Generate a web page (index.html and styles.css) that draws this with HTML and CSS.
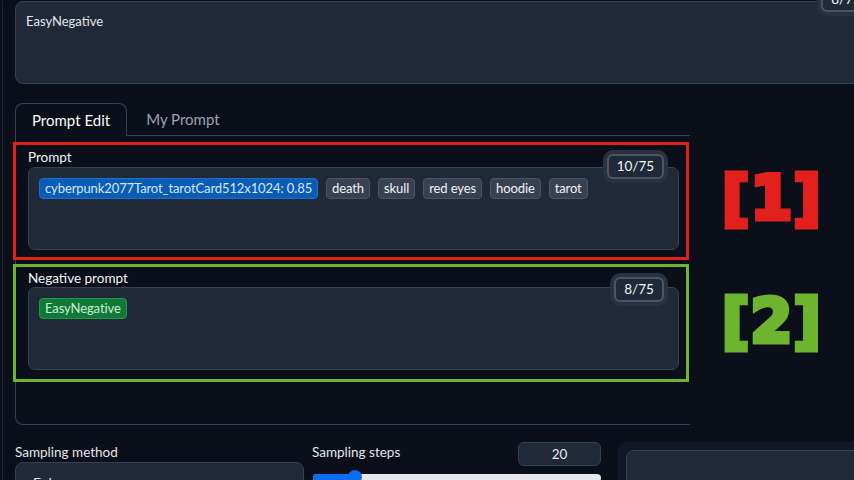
FILE: index.html
```html
<!DOCTYPE html>
<html>
<head>
<meta charset="utf-8">
<link rel="stylesheet" href="styles.css">
</head>
<body>
<div class="page">
  <div class="col">
    <div class="top-area">
      <div class="top-text">EasyNegative</div>
      <div class="counter counter-top">8/75</div>
    </div>

    <div class="tabs">
      <div class="tab-nav">
        <div class="tab active">Prompt Edit</div>
        <div class="tab inactive">My Prompt</div>
        <div class="tab-fill"></div>
      </div>
      <div class="tab-panel">
        <div class="block mark-red">
          <div class="label">Prompt</div>
          <div class="field">
            <span class="chip chip-blue">cyberpunk2077Tarot_tarotCard512x1024: 0.85</span>
            <span class="chip">death</span>
            <span class="chip">skull</span>
            <span class="chip">red eyes</span>
            <span class="chip">hoodie</span>
            <span class="chip">tarot</span>
          </div>
          <div class="counter counter-prompt">10/75</div>
          <div class="tag tag-red">[1]</div>
        </div>
        <div class="block mark-green">
          <div class="label">Negative prompt</div>
          <div class="field">
            <span class="chip chip-green">EasyNegative</span>
          </div>
          <div class="counter counter-neg">8/75</div>
          <div class="tag tag-green">[2]</div>
        </div>
      </div>
    </div>

    <div class="bottom">
      <div class="bcol">
        <div class="blabel">Sampling method</div>
        <div class="dropdown">Euler a</div>
      </div>
      <div class="bcol">
        <div class="steps-head">
          <div class="blabel">Sampling steps</div>
          <div class="num">20</div>
        </div>
        <div class="slider">
          <div class="slider-fill"></div>
          <div class="slider-thumb"></div>
        </div>
      </div>
      <div class="rpanel">
        <div class="rinner"></div>
      </div>
    </div>
  </div>
</div>
</body>
</html>
```

FILE: styles.css
```css
* { box-sizing: border-box; }

html, body {
  margin: 0;
  height: 480px;
  overflow: hidden;
  background: #0b0f19;
  font-family: Lato, "Noto Sans", sans-serif;
  color: #e5e7eb;
}

.page {
  padding-left: 2px;
  width: 960px;
}

.col {
  border-left: 1px solid #1f2533;
  padding-left: 12px;
  height: 480px;
}

/* top textarea */
.top-area {
  position: relative;
  margin-top: 1px;
  width: 900px;
  height: 83px;
  background: #1f2937;
  border: 1px solid #374151;
  border-radius: 8px;
  padding: 9px 10px;
  font-size: 13px;
  line-height: 20px;
}

/* counters */
.counter {
  position: absolute;
  height: 25px;
  background: #1f2937;
  border: 2px solid #4b5563;
  border-radius: 6px;
  box-shadow: 0 0 0 4px #2a3140;
  font-size: 13.5px;
  line-height: 21px;
  text-align: center;
  color: #f3f4f6;
}
.counter-top { left: 805px; top: -15px; width: 50px; }
.counter-prompt { right: 22px; top: 9px; width: 57px; }
.counter-neg { right: 22px; top: 10px; width: 50px; }

/* tabs */
.tabs {
  width: 675px;
  margin-top: 19px;
}
.tab-nav {
  display: flex;
  align-items: flex-end;
  height: 33px;
}
.tab {
  height: 33px;
  font-size: 15px;
  line-height: 32px;
  padding: 0 16px;
  white-space: nowrap;
}
.tab.active {
  border: 1px solid #374151;
  border-bottom: none;
  border-radius: 8px 8px 0 0;
  color: #f9fafb;
}
.tab.inactive {
  padding-left: 19px;
  color: #9ca3af;
  border-bottom: 1px solid #374151;
}
.tab-fill {
  flex: 1;
  height: 33px;
  border-bottom: 1px solid #374151;
}
.tab-panel {
  border-left: 1px solid #374151;
  border-bottom: 1px solid #374151;
  border-bottom-left-radius: 8px;
  padding: 9px 4px 44px 0;
  height: 289px;
  display: flex;
  flex-direction: column;
  gap: 10px;
}

/* prompt blocks */
.block {
  position: relative;
  padding: 2px 7px 7px 12px;
}
.mark-red { outline: 3px solid #e3211c; }
.mark-green { outline: 3px solid #6db52f; padding-top: 2px; padding-bottom: 9px; }

.label {
  font-size: 13.5px;
  line-height: 18px;
  color: #f3f4f6;
}
.mark-red .label { line-height: 20px; }
.field {
  height: 83px;
  background: #1f2937;
  border: 1px solid #374151;
  border-radius: 7px;
  padding: 10px 10px;
  display: flex;
  flex-wrap: wrap;
  align-content: flex-start;
  gap: 8px;
}
.chip {
  height: 21px;
  padding: 0 5px;
  border: 1px solid #4b5563;
  border-radius: 4px;
  background: #374151;
  font-size: 13px;
  letter-spacing: -0.1px;
  line-height: 19px;
  color: #f3f4f6;
  white-space: nowrap;
}
.chip-blue {
  background: #0b5cb5;
  border-color: #1f6fd0;
  color: #d6e6fb;
}
.chip-green {
  background: #0f7a37;
  border-color: #23984a;
  color: #cdeed5;
}

/* annotation tags */
.tag {
  position: absolute;
  left: calc(100% + 36px);
  top: 23px;
  font-family: "DejaVu Sans", sans-serif;
  font-weight: bold;
  font-size: 60px;
  line-height: 60px;
  letter-spacing: 1px;
  white-space: nowrap;
}
.mark-green .tag { top: 24px; }
.tag-red { color: #e3211c; -webkit-text-stroke: 5px #e3211c; }
.tag-green { color: #6db52f; -webkit-text-stroke: 5px #6db52f; }

/* bottom row */
.bottom {
  margin-top: 17px;
  display: flex;
  gap: 8px;
  align-items: flex-start;
}
.bcol {
  width: 289px;
  flex: none;
}
.blabel {
  font-size: 13.5px;
  line-height: 20px;
  color: #e5e7eb;
}
.dropdown {
  background: #1f2937;
  border: 1px solid #374151;
  border-radius: 8px;
  height: 40px;
  padding: 10px 17px;
  font-size: 14px;
  line-height: 20px;
}
.steps-head {
  display: flex;
  justify-content: space-between;
  align-items: flex-start;
}
.num {
  width: 83px;
  height: 24px;
  background: #1f2937;
  border: 1px solid #374151;
  border-radius: 6px;
  text-align: center;
  font-size: 13.5px;
  line-height: 22px;
}
.slider {
  position: relative;
  margin-top: 8px;
  height: 8px;
  background: #e5e7eb;
  border-radius: 4px;
  margin-left: 1px;
}
.slider-fill {
  width: 42px;
  height: 8px;
  background: #0b6cf0;
  border-radius: 4px 0 0 4px;
}
.slider-thumb {
  position: absolute;
  left: 35px;
  top: -4px;
  width: 14px;
  height: 14px;
  border-radius: 50%;
  background: #0b6cf0;
}
.rpanel {
  margin-left: 9px;
  width: 300px;
  height: 60px;
  background: #111726;
  border-radius: 8px;
  padding: 8px;
  flex: none;
}
.rinner {
  height: 60px;
  background: #1f2937;
  border: 1px solid #374151;
  border-radius: 8px;
}
```
